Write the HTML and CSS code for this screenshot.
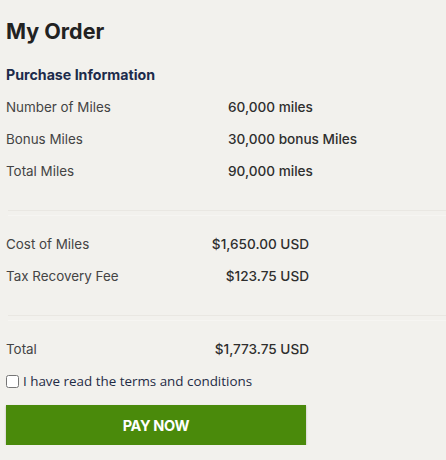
FILE: index.html
```html
<!DOCTYPE html>
<html lang="en">
<head>
<meta charset="utf-8">
<title>My Order</title>
<link rel="stylesheet" href="styles.css">
</head>
<body>
<main class="order">
  <h1 class="title">My Order</h1>
  <h2 class="subtitle">Purchase Information</h2>
  <section class="group">
    <div class="row"><span class="label">Number of Miles</span><span class="value left">60,000 miles</span></div>
    <div class="row"><span class="label">Bonus Miles</span><span class="value left">30,000 bonus Miles</span></div>
    <div class="row"><span class="label">Total Miles</span><span class="value left">90,000 miles</span></div>
  </section>
  <div class="divider"></div>
  <section class="group">
    <div class="row"><span class="label">Cost of Miles</span><span class="value">$1,650.00 USD</span></div>
    <div class="row"><span class="label">Tax Recovery Fee</span><span class="value">$123.75 USD</span></div>
  </section>
  <div class="divider"></div>
  <section class="group">
    <div class="row"><span class="label">Total</span><span class="value">$1,773.75 USD</span></div>
  </section>
  <label class="terms"><input type="checkbox" class="check"><span>I have read the terms and conditions</span></label>
  <button class="pay" type="button">PAY NOW</button>
</main>
</body>
</html>
```

FILE: styles.css
```css
html, body {
  margin: 0;
  padding: 0;
  background: #f2f1ed;
}
body {
  font-family: "Inter", "Lato", "Liberation Sans", sans-serif;
  color: #3a3a3a;
}
.order {
  padding: 16px 0 0 6px;
  display: flex;
  flex-direction: column;
}
.title {
  margin: 0;
  font-size: 21.5px;
  font-weight: 700;
  line-height: 30px;
  color: #222222;
}
.subtitle {
  margin: 19px 0 6px;
  font-size: 14.2px;
  font-weight: 700;
  line-height: 20px;
  color: #1c2b4b;
}
.group {
  display: flex;
  flex-direction: column;
}
.row {
  display: grid;
  grid-template-columns: 200px 103px;
  height: 32px;
  align-items: center;
  font-size: 13.4px;
}
.label {
  color: #444444;
}
.value {
  text-align: right;
  font-size: 13.6px;
  font-weight: 500;
  color: #2e2e2e;
  white-space: nowrap;
}
.value.left {
  text-align: left;
  padding-left: 22px;
}
.divider {
  margin: 23px 0 12px 2px;
  height: 4px;
  border-top: 1px solid #e9e7e2;
  border-bottom: 1px solid #f6f5f2;
}
.terms {
  display: flex;
  align-items: center;
  gap: 4px;
  height: 30px;
  margin-top: 1px;
  font-family: "Open Sans", "Liberation Sans", sans-serif;
  font-size: 13.4px;
  color: #1f2b45;
}
.check {
  margin: 0;
  width: 13px;
  height: 13px;
}
.pay {
  margin-top: 9px;
  width: 300px;
  height: 40px;
  border: none;
  background: #4a8a0b;
  color: #ffffff;
  font-family: "Inter", "Liberation Sans", sans-serif;
  font-size: 14.5px;
  font-weight: 700;
  letter-spacing: -0.3px;
  box-shadow: 0 1px 2px rgba(0,0,0,0.25);
  cursor: pointer;
}
```
